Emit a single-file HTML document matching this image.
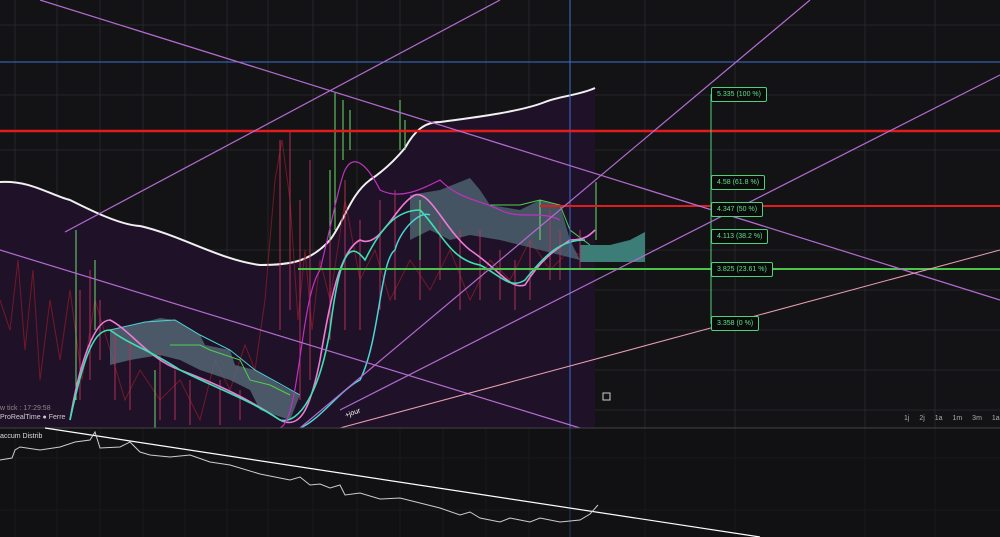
<!DOCTYPE html>
<html><head><style>
html,body{margin:0;padding:0;background:#131316;width:1000px;height:537px;overflow:hidden;font-family:"Liberation Sans",sans-serif}
.lb{position:absolute;left:711px;height:13px;border:1px solid #4fd07a;border-radius:2px;background:#0b0b0c;color:#5fe08a;font-size:7px;line-height:13px;padding:0 5px;white-space:nowrap}
.t{position:absolute;color:#888;font-size:7px;white-space:nowrap}
</style></head><body>
<svg width="1000" height="537" style="position:absolute;left:0;top:0">
<g stroke="#26262b" stroke-width="1">
<path d="M15 0V537M57 0V537M100 0V537M143 0V537M185 0V537M227 0V537M268 0V537M313 0V537M357 0V537M400 0V537M443 0V537M486 0V537M529 0V537M645 0V537M735 0V537M865 0V537M935 0V537"/>
<path d="M0 25H1000M0 95H1000M0 150H1000M0 250H1000M0 290H1000M0 330H1000M0 370H1000M0 410H1000M0 458H1000M0 510H1000"/>
</g>
<path d="M0 182 C30 180 50 195 70 200 C90 210 120 225 140 226 C180 235 220 260 260 265 C290 265 310 262 330 240 C345 220 350 195 370 180 C385 170 395 160 405 148 C415 130 425 122 440 122 C470 118 520 112 545 102 C560 96 580 95 595 88 L595 428 L0 428Z" fill="#1f1228"/>
<path d="M0 182 C30 180 50 195 70 200 C90 210 120 225 140 226 C180 235 220 260 260 265 C290 265 310 262 330 240 C345 220 350 195 370 180 C385 170 395 160 405 148 C415 130 425 122 440 122 C470 118 520 112 545 102 C560 96 580 95 595 88" fill="none" stroke="#f0f0f0" stroke-width="2"/>
<path d="M0 300 L10 330 L18 260 L25 350 L33 270 L40 380 L50 300 L60 360 L70 290 L82 380 L95 300 L110 350 L125 400 L140 370 L160 400 L180 380 L200 420 L215 360 L230 390 L245 345 L255 370 L265 300 L275 180 L282 140 L290 200 L298 320 L305 250 L312 330 L320 260 L330 300 L345 200 L360 280 L375 250 L390 300 L410 260 L430 290 L450 250 L470 300 L490 260 L510 280 L530 240 L550 270 L570 250 L590 260" fill="none" stroke="#8a1a28" stroke-width="1" opacity=".8"/>
<path d="M110 330 L145 322 L160 318 L175 320 L200 335 L205 345 L230 350 L235 365 L255 370 L280 385 L300 395 L290 420 L260 410 L250 390 L230 380 L200 370 L180 360 L160 355 L130 360 L110 365Z" fill="#556a78" opacity=".8"/>
<path d="M410 195 L440 190 L470 178 L480 190 L490 205 L520 210 L540 200 L560 205 L570 240 L580 260 L560 255 L540 250 L520 245 L500 240 L470 235 L450 240 L430 230 L410 240Z" fill="#4f6572" opacity=".8"/>
<path d="M580 245 L610 245 L630 240 L645 232 L645 262 L580 262Z" fill="#3d7d78"/>
<path d="M110 330 L145 322 L175 320 L200 335 L230 350 L255 370 L300 395" fill="none" stroke="#4ad6d6" stroke-width="1"/>
<path d="M170 345 L200 345 L210 350 L240 360 L250 380 L270 385 L290 395" fill="none" stroke="#4cd24c"/>
<path d="M490 205 L520 205 L540 200 L560 205 L570 230 L590 245" fill="none" stroke="#4cd24c"/>
<g stroke="#c03060" stroke-width="1" opacity=".9">
<path d="M80 290V400M90 270V380M100 300V360M115 330V400M130 340V410M160 350V420M175 370V420M190 380V425M220 380V425M240 390V420M280 140V330M290 130V310M300 200V400M310 160V380M330 200V340M345 180V330M360 220V330M380 200V310M395 190V300M420 200V300M440 220V280M460 230V310M480 230V300M500 250V300M515 260V310M530 240V300M550 210V280M560 230V280M580 230V270"/>
</g>
<g stroke="#6edb6e" stroke-width="1">
<path d="M76 230V400M95 260V330M335 93V230M343 100V160M350 110V150M400 100V150M405 120V150M420 200V260M540 200V240M596 182V240M330 170V240M155 370V428"/>
</g>
<path d="M70 420 C80 360 95 320 110 320 C130 330 150 360 180 370 C220 385 250 400 280 420 C300 430 310 410 320 360 C330 300 340 250 360 240 C380 250 395 205 415 195 C430 190 445 230 470 250 C500 270 510 290 525 285 C540 260 555 250 570 240 C585 240 590 235 595 230" fill="none" stroke="#ee7ad8" stroke-width="1.6"/>
<path d="M70 420 C85 350 95 330 110 330 C130 345 150 350 180 370 C220 390 250 400 280 420 C300 425 320 390 330 330 C340 250 350 240 365 260 C380 230 395 210 420 210 C440 230 450 260 480 265 C500 275 510 290 525 280 C545 255 560 240 585 240" fill="none" stroke="#3de0b0" stroke-width="1.6"/>
<path d="M300 428 C320 420 340 390 360 380 C380 340 380 260 395 250 C400 230 420 210 430 215" fill="none" stroke="#4ad6d6" stroke-width="1.5"/>
<path d="M280 428 C300 420 300 300 320 270 C330 230 340 180 345 170 C355 150 370 170 380 190 C400 200 420 190 440 180 C460 200 480 200 500 210 C520 220 540 210 560 220" fill="none" stroke="#c030c0" stroke-width="1.2"/>
<path d="M0 62H1000" stroke="#3b6fd0" stroke-width="1"/>
<path d="M570 0V537" stroke="#3b6fd0" stroke-width="1"/>
<path d="M0 131H1000" stroke="#e11c1c" stroke-width="2.5"/>
<path d="M540 206H1000" stroke="#e11c1c" stroke-width="2"/>
<path d="M298 269H1000" stroke="#4cc44c" stroke-width="2"/>
<path d="M711 94V324" stroke="#4fd07a" stroke-width="1"/>
<g stroke="#b36bd0" stroke-width="1.2" fill="none">
<path d="M40 0L1000 300"/>
<path d="M65 232L500 0"/>
<path d="M340 410L1000 75"/>
<path d="M300 428L810 0"/>
<path d="M0 250L580 428"/>
</g>
<path d="M340 428L1000 250" stroke="#e8a0b0" stroke-width="1" fill="none"/>
<rect x="0" y="428" width="1000" height="109" fill="#101012" opacity=".6"/>
<path d="M0 428H1000" stroke="#444"/>
<path d="M45 428L760 537" stroke="#fff" stroke-width="1.2"/>
<path d="M0 460 L12 458 L15 450 L20 447 L40 450 L60 447 L75 442 L90 440 L95 432 L100 448 L120 447 L130 442 L140 452 L150 455 L170 457 L190 455 L210 462 L230 465 L260 474 L275 477 L290 480 L300 477 L310 485 L320 484 L330 488 L340 485 L345 495 L360 493 L380 499 L400 498 L420 503 L440 508 L460 515 L470 512 L480 518 L490 520 L500 522 L510 518 L520 520 L530 522 L540 518 L560 522 L580 520 L590 514 L598 505" fill="none" stroke="#ccc" stroke-width="1"/>
<rect x="603" y="393" width="7" height="7" fill="none" stroke="#ccc"/>
</svg>
<div class="t" style="left:0;top:405px">w tick : 17:29:58</div>
<div class="t" style="left:0;top:414px;color:#ccc">ProRealTime ● Ferre</div>
<div class="t" style="left:0;top:433px;color:#ddd">accum Distrib</div>
<div class="t" style="left:345px;top:410px;color:#fff;transform:rotate(-20deg)">+jour</div>
<div class="t" style="left:904px;top:415px;color:#aaa;word-spacing:8px">1j 2j 1a 1m 3m 1a</div>
<div class="lb" style="top:87px">5.335 (100 %)</div>
<div class="lb" style="top:175px">4.58 (61.8 %)</div>
<div class="lb" style="top:202px">4.347 (50 %)</div>
<div class="lb" style="top:229px">4.113 (38.2 %)</div>
<div class="lb" style="top:262px">3.825 (23.61 %)</div>
<div class="lb" style="top:316px">3.358 (0 %)</div>
</body></html>
